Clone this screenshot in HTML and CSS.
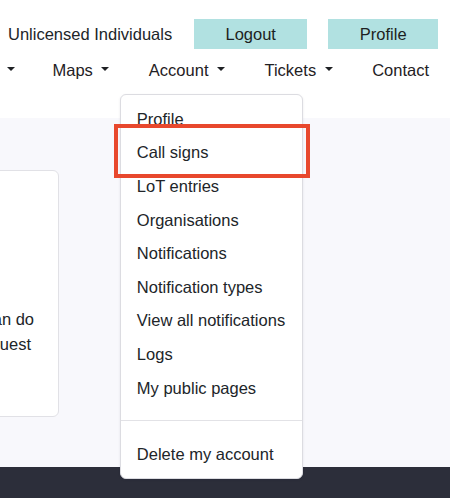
FILE: index.html
```html
<!DOCTYPE html>
<html lang="en">
<head>
<meta charset="utf-8">
<title>Account menu</title>
<link rel="stylesheet" href="styles.css">
</head>
<body>
<header class="site-header">
  <div class="topbar">
    <span class="user-group">Unlicensed Individuals</span>
    <a class="btn btn-logout" href="#">Logout</a>
    <a class="btn btn-profile" href="#">Profile</a>
  </div>
  <nav class="mainnav">
    <a class="nav-link nav-link--cut" href="#"><span class="caret"></span></a>
    <a class="nav-link" href="#">Maps<span class="caret"></span></a>
    <div class="nav-item">
      <a class="nav-link" href="#">Account<span class="caret"></span></a>
      <div class="dropdown">
        <a class="dropdown-item" href="#">Profile</a>
        <a class="dropdown-item" href="#">Call signs</a>
        <a class="dropdown-item" href="#">LoT entries</a>
        <a class="dropdown-item" href="#">Organisations</a>
        <a class="dropdown-item" href="#">Notifications</a>
        <a class="dropdown-item" href="#">Notification types</a>
        <a class="dropdown-item" href="#">View all notifications</a>
        <a class="dropdown-item" href="#">Logs</a>
        <a class="dropdown-item" href="#">My public pages</a>
        <hr class="dropdown-divider">
        <a class="dropdown-item" href="#">Delete my account</a>
        <span class="highlight-box"></span>
      </div>
    </div>
    <a class="nav-link" href="#">Tickets<span class="caret"></span></a>
    <a class="nav-link" href="#">Contact</a>
  </nav>
</header>
<main class="content">
  <section class="card">
    <p class="card-text">
      <span class="card-line">Here is what you can do</span>
      <span class="card-line card-line--second">or submit a request</span>
    </p>
  </section>
</main>
<footer class="site-footer"></footer>
</body>
</html>
```
FILE: styles.css
```css
* { box-sizing: border-box; }

html, body {
  margin: 0;
  padding: 0;
}

body {
  font-family: "Liberation Sans", Arial, sans-serif;
  font-size: 16.5px;
  line-height: 24px;
  color: #212529;
  background: #ffffff;
  overflow: hidden;
  width: 450px;
  height: 498px;
}

a { color: inherit; text-decoration: none; }

.site-header {
  height: 118px;
  background: #ffffff;
}

.topbar {
  display: flex;
  align-items: center;
  padding: 19px 0 0 8px;
  height: 49px;
}

.user-group {
  margin-top: -1px;
}

.btn {
  display: flex;
  align-items: center;
  justify-content: center;
  height: 30px;
  padding-bottom: 1px;
  background: #b1e1e1;
  color: #1d1f22;
}

.btn-logout {
  width: 113px;
  margin-left: 22px;
}

.btn-profile {
  width: 110px;
  margin-left: 21px;
}

.mainnav {
  display: flex;
  align-items: center;
  gap: 39.5px;
  margin-top: 9px;
  padding-left: 7px;
  height: 24px;
}

.nav-item {
  position: relative;
}

.nav-link {
  display: flex;
  align-items: center;
  height: 24px;
  color: #1f2124;
}

.nav-link--cut {
  margin-right: -2px;
}

.caret {
  display: block;
  width: 0;
  height: 0;
  margin-left: 8.5px;
  margin-bottom: 2px;
  border-top: 4.8px solid currentColor;
  border-left: 4.5px solid transparent;
  border-right: 4.5px solid transparent;
}

.nav-link--cut .caret {
  margin-left: 0;
}

.dropdown {
  position: absolute;
  top: 36px;
  left: -29px;
  width: 183px;
  padding: 7px 0 7px;
  background: #ffffff;
  border: 1px solid #dcdce1;
  border-radius: 6px;
  box-shadow: 0 1px 3px rgba(30, 30, 50, 0.08);
  z-index: 10;
}

.dropdown-item {
  display: block;
  padding: 4.8px 16px;
  line-height: 24px;
  white-space: nowrap;
  color: #212529;
}

.dropdown-divider {
  margin: 15.6px 0 16px;
  border: 0;
  border-top: 1px solid #e2e2e6;
  height: 0;
}

.highlight-box {
  position: absolute;
  top: 29px;
  left: -7px;
  width: 196px;
  height: 54px;
  border: 4px solid #e8482d;
  pointer-events: none;
}

.content {
  height: 349px;
  background: #f8f8fc;
  padding-top: 52px;
}

.card {
  width: 359px;
  height: 247px;
  margin-left: -300px;
  background: #ffffff;
  border: 1px solid #e1e1e6;
  border-radius: 6px;
  padding: 136px 24px 0 0;
}

.card-text {
  margin: 0;
  text-align: right;
  line-height: 25px;
}

.card-line {
  display: block;
  white-space: nowrap;
}

.card-line--second {
  padding-right: 3px;
}

.site-footer {
  height: 31px;
  background: #2c2e3a;
}
```
